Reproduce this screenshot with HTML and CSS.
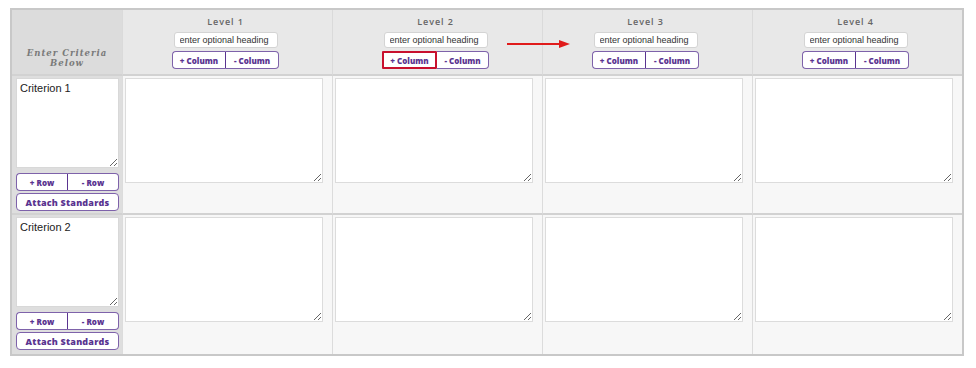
FILE: index.html
```html
<!DOCTYPE html>
<html lang="en">
<head>
    <meta charset="UTF-8">
    <meta name="viewport" content="width=device-width, initial-scale=1.0">
    <title>Rubric Builder</title>
    <link rel="stylesheet" href="styles.css">
</head>
<body>
    <div class="rubric">
        <!-- header row -->
        <div class="criteria-head">Enter Criteria<br>Below</div>
        <div class="level-head">
            <div class="level-name">Level 1</div>
            <input type="text" class="heading-input" placeholder="enter optional heading">
            <div class="btn-group">
                <button class="mini-btn">+ Column</button><button class="mini-btn">- Column</button>
            </div>
        </div>
        <div class="level-head">
            <div class="level-name">Level 2</div>
            <input type="text" class="heading-input" placeholder="enter optional heading">
            <div class="btn-group">
                <button class="mini-btn marked">+ Column</button><button class="mini-btn">- Column</button>
            </div>
        </div>
        <div class="level-head">
            <div class="level-name">Level 3</div>
            <input type="text" class="heading-input" placeholder="enter optional heading">
            <div class="btn-group">
                <button class="mini-btn">+ Column</button><button class="mini-btn">- Column</button>
            </div>
        </div>
        <div class="level-head">
            <div class="level-name">Level 4</div>
            <input type="text" class="heading-input" placeholder="enter optional heading">
            <div class="btn-group">
                <button class="mini-btn">+ Column</button><button class="mini-btn">- Column</button>
            </div>
        </div>

        <!-- criterion 1 -->
        <div class="criteria-cell">
            <textarea class="criteria-text">Criterion 1</textarea>
            <div class="btn-group row-btns">
                <button class="mini-btn">+ Row</button><button class="mini-btn">- Row</button>
            </div>
            <button class="mini-btn attach-btn">Attach Standards</button>
        </div>
        <div class="level-cell"><textarea class="level-text"></textarea></div>
        <div class="level-cell"><textarea class="level-text"></textarea></div>
        <div class="level-cell"><textarea class="level-text"></textarea></div>
        <div class="level-cell"><textarea class="level-text"></textarea></div>

        <!-- criterion 2 -->
        <div class="criteria-cell last">
            <textarea class="criteria-text">Criterion 2</textarea>
            <div class="btn-group row-btns">
                <button class="mini-btn">+ Row</button><button class="mini-btn">- Row</button>
            </div>
            <button class="mini-btn attach-btn">Attach Standards</button>
        </div>
        <div class="level-cell last"><textarea class="level-text"></textarea></div>
        <div class="level-cell last"><textarea class="level-text"></textarea></div>
        <div class="level-cell last"><textarea class="level-text"></textarea></div>
        <div class="level-cell last"><textarea class="level-text"></textarea></div>
    </div>

    <!-- annotation arrow -->
    <svg class="arrow" width="70" height="12" viewBox="0 0 70 12">
        <line x1="2" y1="6" x2="56" y2="6" stroke="#e01b1b" stroke-width="2.2"/>
        <polygon points="54,2 65,6 54,10" fill="#e01b1b"/>
    </svg>
</body>
</html>
```

FILE: styles.css
```css
body {
    margin: 0;
    font-family: "Liberation Sans", Arial, sans-serif;
    background: #fff;
}

.rubric {
    display: grid;
    grid-template-columns: 110px repeat(4, 210px);
    width: fit-content;
    margin: 8px 0 0 10px;
    border: 2px solid #c8c8c8;
}

.criteria-head {
    background: #dcdcdc;
    border-bottom: 2px solid #d2d2d2;
    display: flex;
    align-items: flex-end;
    justify-content: center;
    padding-bottom: 6px;
    box-sizing: content-box;
    height: 58px;
    text-align: center;
    font-family: "DejaVu Serif", "Liberation Serif", serif;
    font-style: italic;
    font-weight: bold;
    font-size: 8.5px;
    line-height: 10px;
    letter-spacing: 1px;
    color: #7a7a7a;
}

.level-head {
    background: #e8e8e8;
    border-left: 1px solid #dadada;
    border-bottom: 2px solid #d2d2d2;
    display: flex;
    flex-direction: column;
    align-items: center;
    padding: 6px 4px 0 0;
    box-sizing: border-box;
    height: 66px;
}

.level-name {
    font-family: "Open Sans", sans-serif;
    font-weight: 600;
    font-size: 9px;
    line-height: 12px;
    letter-spacing: 0.9px;
    color: #666;
}

.heading-input {
    width: 104px;
    height: 16px;
    margin-top: 4px;
    padding: 0 5px;
    box-sizing: border-box;
    border: 1px solid #d4d4d4;
    border-radius: 3px;
    background: #fff;
    font-family: "Liberation Sans", Arial, sans-serif;
    font-size: 9px;
}

.heading-input::placeholder {
    color: #333;
}

.btn-group {
    display: flex;
    margin-top: 3px;
    width: 107px;
}

.mini-btn {
    flex: 1;
    height: 18px;
    padding: 0;
    background: #fff;
    border: 1px solid #7e62aa;
    font-family: "Open Sans", sans-serif;
    font-weight: 800;
    font-size: 8px;
    color: #5a3490;
    cursor: pointer;
}

.btn-group .mini-btn:first-child {
    border-radius: 4px 0 0 4px;
    border-right: 1px solid #5a3490;
}

.btn-group .mini-btn:last-child {
    border-radius: 0 4px 4px 0;
    border-left: none;
}

.btn-group .mini-btn.marked {
    border: 2px solid #c8102e;
    border-radius: 1px;
}

.criteria-cell {
    background: #dedede;
    border-bottom: 2px solid #d2d2d2;
    padding: 2px 3px 0 4px;
    height: 139px;
    box-sizing: border-box;
}

.criteria-cell.last,
.level-cell.last {
    border-bottom: none;
}

.criteria-text {
    display: block;
    width: 103px;
    height: 90px;
    margin: 0;
    padding: 3px;
    box-sizing: border-box;
    border: 1px solid #d8d8d8;
    background: #fff;
    font-family: "Liberation Sans", Arial, sans-serif;
    font-size: 11px;
    color: #222;
    resize: vertical;
}

.row-btns {
    width: 103px;
    margin-top: 5px;
}

.attach-btn {
    display: block;
    width: 103px;
    height: 18px;
    margin-top: 2px;
    border-radius: 4px;
    font-size: 9px;
    letter-spacing: 0.2px;
}

.level-cell {
    background: #f7f7f7;
    border-left: 1px solid #dcdcdc;
    border-bottom: 2px solid #d2d2d2;
    padding: 2px 0 0 2px;
    height: 139px;
    box-sizing: border-box;
}

.level-text {
    display: block;
    width: 198px;
    height: 105px;
    margin: 0;
    box-sizing: border-box;
    border: 1px solid #dcdcdc;
    background: #fff;
    resize: vertical;
}

.arrow {
    position: absolute;
    left: 505px;
    top: 38px;
}
```
